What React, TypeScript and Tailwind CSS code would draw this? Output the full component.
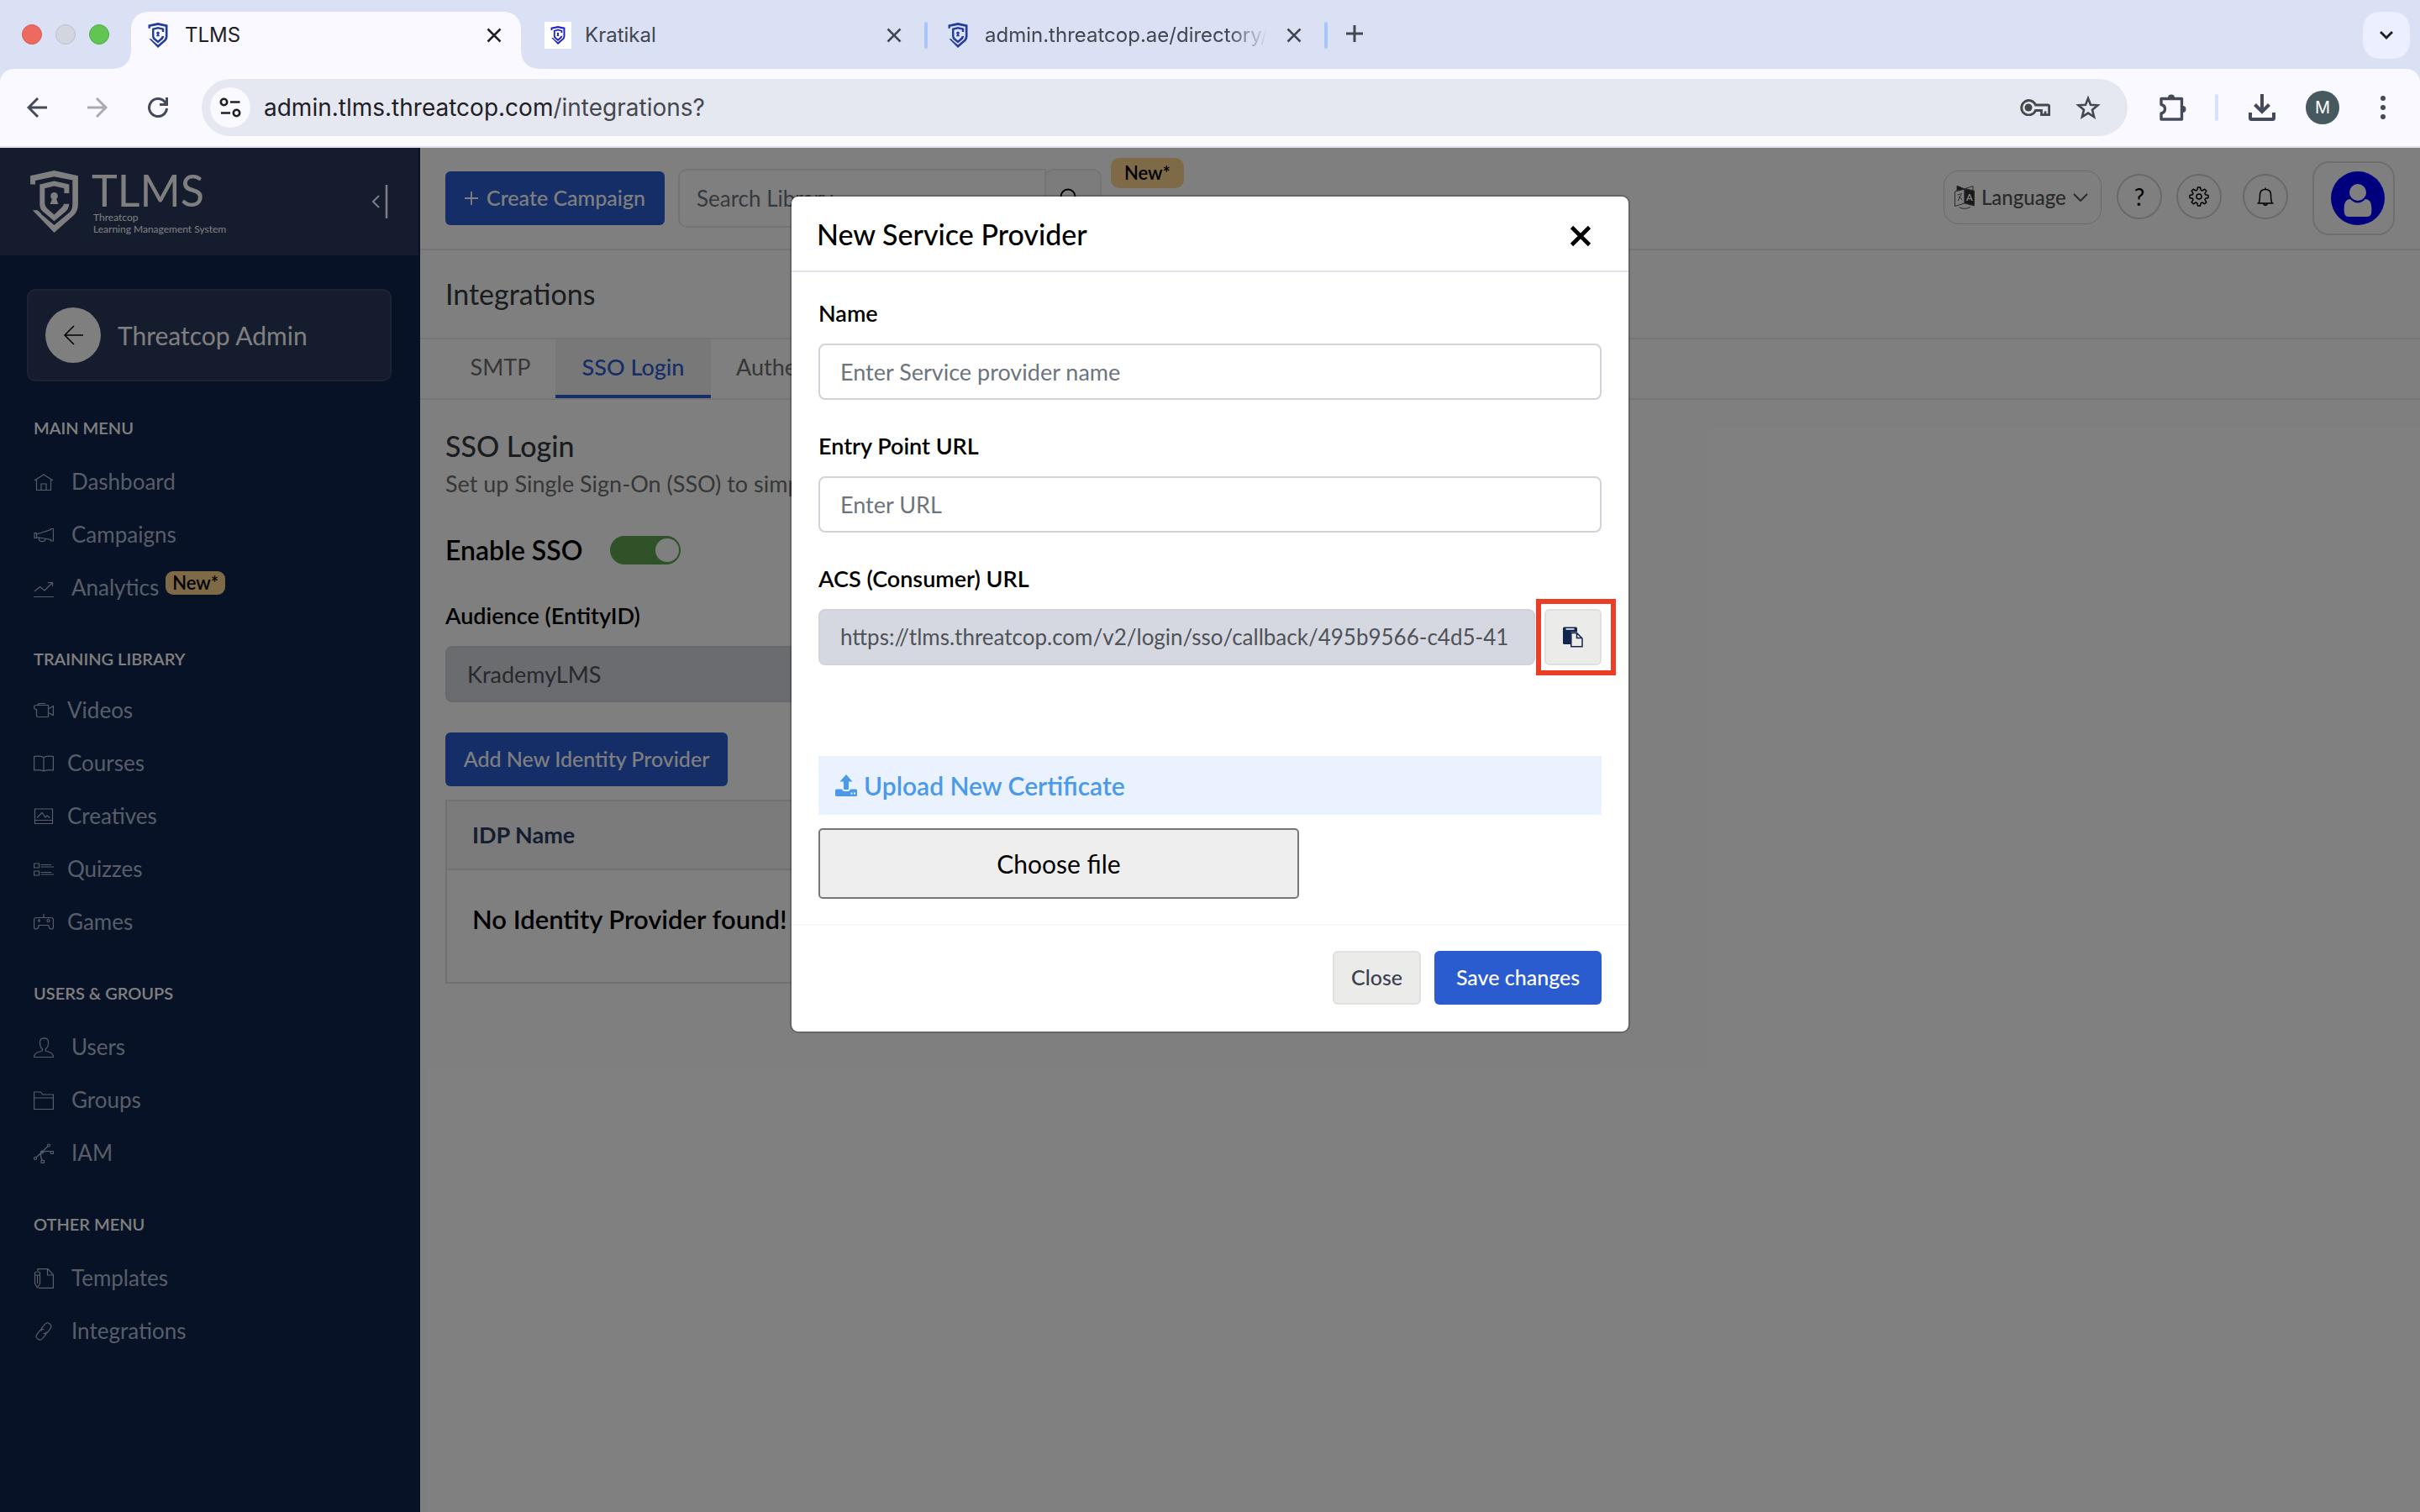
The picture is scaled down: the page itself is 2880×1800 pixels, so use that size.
import React, { useState } from "react";

type IconProps = { className?: string };

type MenuItem = {
  label: string;
  icon: React.FC;
  isNew?: boolean;
};

type MenuSection = {
  title: string;
  compact?: boolean;
  items: MenuItem[];
};

const ShieldLogo: React.FC<IconProps> = ({ className }) => (
  <svg viewBox="0 0 172 224" className={className} fill="currentColor" aria-hidden="true">
    <path d="M0 50V19L86 0L172 19V122Q172 144 158 160L86 224L8 143H24Q32 146 42 160L86 197L142 150Q152 140 152 122V35L86 22L18 36V50Z" />
    <path d="M140 82H122V64L86 56L52 64V118Q52 128 60 136L86 159L112 134Q119 128 121 120H140Q138 138 128 147L86 182L44 147Q34 137 34 120V50L86 38L140 50Z" />
    <circle cx="86" cy="92" r="13" />
    <path d="M80 98H92L101 121H71Z" />
  </svg>
);

// Thin outline icons of the side menu
const LineIcon: React.FC<{ children: React.ReactNode }> = ({ children }) => (
  <svg viewBox="0 0 24 24" className="size-6 shrink-0" fill="none" stroke="currentColor" strokeWidth="1.2" aria-hidden="true">
    {children}
  </svg>
);

const HomeIcon = () => (
  <LineIcon>
    <path d="M1 10L12 3L23 10M3.500 9V21.500H20.500V9M9 21.500V14H15V21.500" />
  </LineIcon>
);

const MegaphoneIcon = () => (
  <LineIcon>
    <path d="M1 9.500H3.500V15.500H1ZM3.500 11L20.500 5.500V4.500H23.500V19H20.500V17.500L3.500 14.500M6 15C6 21 14 21 14 16.500" />
  </LineIcon>
);

const TrendIcon = () => (
  <LineIcon>
    <path d="M1 16L7.500 10.500L13 15L22 6M17 5.500H22.500V10M0 22.500H24" />
  </LineIcon>
);

const VideoIcon = () => (
  <LineIcon>
    <path d="M3.500 10.500Q.600 10.500 .600 8.500V7.500Q.600 5.500 3.500 5.500H17.500V18.500Q17.500 19.500 16 19.500H5Q3.500 19.500 3.500 18ZM5 5.500Q5 3.500 7 3.500H14M17.500 10L23.400 6.500V17.500L17.500 14.500" />
  </LineIcon>
);

const BookIcon = () => (
  <LineIcon>
    <path d="M12 4.500Q7 2.500 .600 3.500V20Q7 19 12 21Q17 19 23.400 20V3.500Q17 2.500 12 4.500V21" />
  </LineIcon>
);

const PictureIcon = () => (
  <LineIcon>
    <path d="M1.500 3H22.500V20.500H1.500ZM1.500 16.500H22.500M4 13.500L10 7.500L14 13L16 11L19.500 13.500" />
  </LineIcon>
);

const QuizIcon = () => (
  <LineIcon>
    <path d="M.600 5H6.500V10H.600ZM.600 14H6.500V19H.600ZM8.500 6.500H21M8.500 9H24M8.500 15.500H21M8.500 18H24" />
  </LineIcon>
);

const GamepadIcon = () => (
  <LineIcon>
    <path d="M12 2V6M3 6.500H21Q23.400 6.500 23.400 9V18.500Q23.400 20 20.500 20Q19 20 17.500 15.500H6.500Q5 20 3.500 20Q.600 20 .600 18.500V9Q.600 6.500 3 6.500ZM6.500 8V12M4.500 10H8.500" />
    <circle cx="17.500" cy="10" r="1.500" />
  </LineIcon>
);

const UserIcon = () => (
  <LineIcon>
    <path d="M.600 23.500V22Q2 17.500 9.500 16.500Q10.500 16 10.500 14Q7.500 11.500 7.500 7Q7 1 12.500 .800Q18 1 17.500 7Q17.500 11.500 14 14Q14 16 15 16.500Q22 17.500 23.400 22V23.500Z" />
  </LineIcon>
);

const FolderIcon = () => (
  <LineIcon>
    <path d="M.600 2H8.500L10.500 5H23.400V22.500H.600ZM.600 9H23.400" />
  </LineIcon>
);

const NodesIcon = () => (
  <LineIcon>
    <path d="M3 17L17 3.500M8.500 12Q13 8 20.500 10M8.500 12Q8 17 10.500 20.500M20.500 9.500H23.400V12.500H20.500ZM9 20.500H12.500V23.400H9Z" />
    <circle cx="2" cy="18" r="1.500" />
    <circle cx="18" cy="2.500" r="1.500" />
    <circle cx="10" cy="10.500" r="1.500" />
  </LineIcon>
);

const TemplateIcon = () => (
  <LineIcon>
    <path d="M5 3V.600H17L23.400 7.500V23.400H6M16.500 .600V8H23.400M1.500 5.500Q1.500 4 4.500 4Q7.500 4 7.500 5.500V18L4.500 23L1.500 18ZM1.500 8H7.500M4.500 8V18" />
  </LineIcon>
);

const LinkIcon = () => (
  <LineIcon>
    <g transform="rotate(38 12 12)">
      <path d="M9.500 13.500Q7.800 12 7.800 10V4.500Q7.800 .500 12 .500Q16.200 .500 16.200 4.500V10Q16.200 13 13 14" />
      <path d="M14.500 10.500Q16.200 12 16.200 14V19.500Q16.200 23.500 12 23.500Q7.800 23.500 7.800 19.500V14Q7.800 11 11 10" />
    </g>
  </LineIcon>
);

const CloseIcon: React.FC<IconProps> = ({ className }) => (
  <svg viewBox="0 0 24 24" className={className} fill="none" stroke="currentColor" aria-hidden="true">
    <path d="M3 3L21 21M21 3L3 21" />
  </svg>
);

const ArrowIcon: React.FC<IconProps> = ({ className }) => (
  <svg viewBox="0 0 24 24" className={className} fill="none" stroke="currentColor" aria-hidden="true">
    <path d="M24 12H2M13 1L2 12L13 23" />
  </svg>
);

const menuSections: MenuSection[] = [
  {
    title: "MAIN MENU",
    items: [
      { label: "Dashboard", icon: HomeIcon },
      { label: "Campaigns", icon: MegaphoneIcon },
      { label: "Analytics", icon: TrendIcon, isNew: true },
    ],
  },
  {
    title: "TRAINING LIBRARY",
    compact: true,
    items: [
      { label: "Videos", icon: VideoIcon },
      { label: "Courses", icon: BookIcon },
      { label: "Creatives", icon: PictureIcon },
      { label: "Quizzes", icon: QuizIcon },
      { label: "Games", icon: GamepadIcon },
    ],
  },
  {
    title: "USERS & GROUPS",
    items: [
      { label: "Users", icon: UserIcon },
      { label: "Groups", icon: FolderIcon },
      { label: "IAM", icon: NodesIcon },
    ],
  },
  {
    title: "OTHER MENU",
    items: [
      { label: "Templates", icon: TemplateIcon },
      { label: "Integrations", icon: LinkIcon },
    ],
  },
];

const TabStrip: React.FC = () => (
  <div className="flex h-[82px] items-start bg-[#dbe1f5] pr-3 pl-[26px] text-[24px] text-[#41464f]">
    <div className="flex h-[82px] w-[130px] items-center gap-4">
      <span className="size-6 rounded-full border border-[#d85a4e] bg-[#ed6a5e]" />
      <span className="size-6 rounded-full border border-[#bcc0c9] bg-[#d2d6e0]" />
      <span className="size-6 rounded-full border border-[#52ac43] bg-[#61c554]" />
    </div>

    {/* Active tab with flared feet */}
    <div className="relative mt-[14px] flex h-[68px] w-[464px] items-center rounded-t-[20px] bg-[#f9f9ff] px-5 pb-3 text-[#1f2024]">
      <svg viewBox="0 0 24 24" className="absolute bottom-0 -left-6 size-6 fill-[#f9f9ff]" aria-hidden="true">
        <path d="M24 0V24H0Q24 24 24 0Z" />
      </svg>
      <svg viewBox="0 0 24 24" className="absolute -right-6 bottom-0 size-6 fill-[#f9f9ff]" aria-hidden="true">
        <path d="M0 0V24H24Q0 24 0 0Z" />
      </svg>
      <ShieldLogo className="h-[30px] w-6 text-[#233d99]" />
      <span className="ml-5 flex-1">TLMS</span>
      <button type="button" aria-label="Close tab" className="mr-0.5">
        <CloseIcon className="size-5 stroke-3" />
      </button>
    </div>

    <div className="flex h-[82px] w-[480px] items-center pt-0.5 pl-7">
      <span className="flex size-8 items-center justify-center bg-white">
        <ShieldLogo className="h-[22px] w-[18px] text-[#1c22c8]" />
      </span>
      <span className="ml-4 flex-1">Kratikal</span>
      <button type="button" aria-label="Close tab" className="mr-[26px]">
        <CloseIcon className="size-5 stroke-3" />
      </button>
    </div>

    <div className="flex h-[82px] w-[480px] items-center pt-0.5">
      <span className="h-8 w-1 rounded-full bg-[#a9c6fa]" />
      <ShieldLogo className="ml-6 h-[30px] w-6 text-[#233d99]" />
      <span className="ml-5 w-[336px] overflow-hidden whitespace-nowrap [mask-image:linear-gradient(to_right,black_86%,transparent)]">
        admin.threatcop.ae/directory/
      </span>
      <button type="button" aria-label="Close tab" className="ml-[22px]">
        <CloseIcon className="size-5 stroke-3" />
      </button>
      <span className="ml-[26px] h-8 w-1 rounded-full bg-[#a9c6fa]" />
    </div>

    <button type="button" aria-label="New tab" className="mt-[30px] ml-[22px]">
      <svg viewBox="0 0 20 20" className="size-5" fill="none" stroke="currentColor" strokeWidth="3" aria-hidden="true">
        <path d="M10 0V20M0 10H20" />
      </svg>
    </button>

    <button
      type="button"
      aria-label="Search tabs"
      className="mt-[14px] ml-auto flex size-14 items-center justify-center rounded-[20px] bg-[#ebefff] text-[#1f2024]"
    >
      <svg viewBox="0 0 16 12" className="h-3 w-4" fill="none" stroke="currentColor" strokeWidth="3" aria-hidden="true">
        <path d="M1 2L8 9L15 2" />
      </svg>
    </button>
  </div>
);

const AddressBar: React.FC = () => (
  <div className="bg-[#dbe1f5]">
    <div className="flex h-[94px] items-center rounded-t-[16px] border-b-2 border-[#dedfea] bg-[#f9f9ff] pr-[41px] pl-8 text-[#434a59]">
      <button type="button" aria-label="Back">
        <ArrowIcon className="size-6 stroke-3" />
      </button>
      <button type="button" aria-label="Forward" className="ml-12 text-[#a9abb2]">
        <ArrowIcon className="size-6 rotate-180 stroke-3" />
      </button>
      <button type="button" aria-label="Reload" className="ml-12">
        <svg viewBox="0 0 24 24" className="size-6" fill="none" stroke="currentColor" strokeWidth="3" aria-hidden="true">
          <path d="M22.500 13A10.500 10.500 0 1 1 20 5.200L22 7.500" />
          <path d="M22.500 0V8.500H14" />
        </svg>
      </button>

      <div className="ml-10 flex h-[68px] flex-1 items-center rounded-full bg-[#e5e8f1] pr-8 pl-2.5">
        <span className="flex size-12 items-center justify-center rounded-full bg-[#f9f9ff] text-[#1f2024]">
          <svg viewBox="0 0 26 24" className="h-6 w-[26px]" fill="none" stroke="currentColor" strokeWidth="2.600" aria-hidden="true">
            <circle cx="5.500" cy="5.500" r="3.700" />
            <path d="M13 5.500H24.500M2 18.500H13" />
            <circle cx="20.500" cy="18.500" r="3.700" />
          </svg>
        </span>
        <span className="ml-4 flex-1 text-[28px] leading-9 text-[#46474d]">
          <span className="text-[#1f2024]">admin.tlms.threatcop.com</span>/integrations?
        </span>
        <button type="button" aria-label="Passwords" className="text-[#46474b]">
          <svg viewBox="0 0 36 20" className="h-5 w-9" fill="none" stroke="currentColor" strokeWidth="2.800" aria-hidden="true">
            <path d="M18.500 7H33Q34.600 7 34.600 8.500V18.600H25.500V13.500H18.500A8.700 8.700 0 1 1 18.500 7Z" />
            <path d="M30 19V14.500" />
            <circle cx="10" cy="10" r="4.500" className="fill-current stroke-none" />
          </svg>
        </button>
        <button type="button" aria-label="Bookmark" className="ml-[30px] text-[#46474b]">
          <svg viewBox="0 0 30 30" className="size-[30px]" fill="none" stroke="currentColor" strokeWidth="2.600" aria-hidden="true">
            <path d="M15 4L18 11.700L26.500 12.300L20 17.800L22.100 26.200L15 21.600L7.900 26.200L10 17.800L3.500 12.300L12 11.700Z" />
          </svg>
        </button>
      </div>

      <button type="button" aria-label="Extensions" className="ml-[38px]">
        <svg viewBox="0 0 32 32" className="size-8" fill="none" stroke="currentColor" strokeWidth="3.400" strokeLinejoin="round" aria-hidden="true">
          <path d="M2 5.500H26.500V30H2V23Q6.500 22 6.500 17.500Q6.500 13.500 2 12.500Z" />
          <path d="M10 4.500A4 4 0 0 1 18 4.500ZM27.500 14A4 4 0 0 1 27.500 22Z" className="fill-current stroke-none" />
        </svg>
      </button>
      <span className="ml-[34px] h-8 w-1 rounded-full bg-[#d6e2fb]" />
      <button type="button" aria-label="Downloads" className="ml-9">
        <svg viewBox="0 0 32 32" className="size-8" fill="none" stroke="currentColor" strokeWidth="4" aria-hidden="true">
          <path d="M16 0V21M7.500 12.500L16 21L24.500 12.500M2 22V28.500Q2 30 3.500 30H28.500Q30 30 30 28.500V22" />
        </svg>
      </button>
      <button type="button" className="ml-9 size-10 rounded-full bg-[#46595f] text-[20px] text-white">
        M
      </button>
      <button type="button" aria-label="Menu" className="ml-[49px]">
        <svg viewBox="0 0 6 28" className="h-7 w-1.5 fill-current" aria-hidden="true">
          <circle cx="3" cy="3" r="3" />
          <circle cx="3" cy="14" r="3" />
          <circle cx="3" cy="25" r="3" />
        </svg>
      </button>
    </div>
  </div>
);

const Sidebar: React.FC = () => (
  <aside className="w-[500px] shrink-0 bg-[#0e244c] text-white">
    <div className="mr-0.5 flex h-32 items-center bg-[#28385c] pl-9">
      <ShieldLogo className="h-[74px] w-[57px]" />
      <div className="ml-4">
        <div className="text-[52px] leading-[52px]">TLMS</div>
        <div className="pl-0.5 text-[12px] leading-[14px]">Threatcop</div>
        <div className="pl-0.5 text-[12px] leading-[14px]">Learning Management System</div>
      </div>
      <button type="button" aria-label="Collapse menu" className="mr-9 ml-auto">
        <svg viewBox="0 0 20 40" className="h-10 w-5" fill="none" stroke="currentColor" aria-hidden="true">
          <path d="M9 13L2 20L9 27" strokeWidth="2" />
          <path d="M18 0V40" strokeWidth="2.500" />
        </svg>
      </button>
    </div>

    <div className="mt-10 mr-[34px] mb-[38px] ml-8 flex h-[110px] items-center rounded-[10px] border-2 border-[#3a4665] bg-[#28385c] pl-5">
      <button type="button" aria-label="Go back" className="flex size-[66px] items-center justify-center rounded-full bg-white text-black">
        <ArrowIcon className="size-6 stroke-[1.5]" />
      </button>
      <span className="ml-5 text-[30px]">Threatcop Admin</span>
    </div>

    <nav className="flex flex-col gap-9">
      {menuSections.map((section) => (
        <section key={section.title}>
          <h2 className="pl-10 text-[20px] leading-[34px] font-semibold">{section.title}</h2>
          <ul className={section.compact ? "mt-[13px]" : "mt-4"}>
            {section.items.map(({ label, icon: Icon, isNew }) => (
              <li key={label} className="pl-10 text-[26px] text-[#b0bbd2]">
                <a href="#" className={section.compact ? "flex h-[63px] items-center gap-4" : "flex h-[63px] items-center gap-[21px]"}>
                  <Icon />
                  <span className="flex items-start gap-2">
                    {label}
                    {isNew && (
                      <span className="rounded-[9px] bg-[#ffd591] px-2 text-[22px] leading-7 font-semibold text-black">New*</span>
                    )}
                  </span>
                </a>
              </li>
            ))}
          </ul>
        </section>
      ))}
    </nav>
  </aside>
);

const TopBar: React.FC = () => (
  <header className="flex h-[122px] items-start border-b-2 border-[#e6e6f2] px-[30px]">
    <button type="button" className="mt-7 flex h-16 w-[261px] items-center justify-center gap-2.5 rounded-md bg-[#2a5cd0] text-[25px] font-medium text-white">
      <svg viewBox="0 0 16 16" className="size-4" fill="none" stroke="currentColor" strokeWidth="1.800" aria-hidden="true">
        <path d="M8 0V16M0 8H16" />
      </svg>
      Create Campaign
    </button>
    <div className="mt-[25px] ml-4 flex h-[70px] w-[504px]">
      <input
        type="text"
        aria-label="Search Library"
        placeholder="Search Library"
        className="w-[438px] rounded-l-[10px] border-2 border-[#e6e6f2] px-5 text-[26px] placeholder:text-[#6c757d]"
      />
      <button type="button" aria-label="Search" className="-ml-0.5 flex flex-1 items-center rounded-[10px] border-2 border-[#e6e6f2] bg-[#f8f8f8] pl-4">
        <svg viewBox="0 0 24 24" className="size-6" fill="none" stroke="black" strokeWidth="1.800" aria-hidden="true">
          <circle cx="10" cy="10" r="8.500" />
          <path d="M16 16L23 23" />
        </svg>
      </button>
    </div>
    <span className="mt-3 ml-[11px] rounded-[10px] bg-[#ffd591] px-4 text-[22px] leading-9 font-semibold text-black">New*</span>

    <div className="ml-auto flex">
      <button type="button" className="mt-[27px] flex h-16 w-[188px] items-center rounded-[18px] border border-[#d4d4d4] pl-3 text-[24px] font-medium text-[#555]">
        <svg viewBox="0 0 24 28" className="h-7 w-6" fill="none" stroke="currentColor" aria-hidden="true">
          <path d="M3 0L12 4L3 6ZM12 3.500L23.500 6V24L12 21Z" className="fill-[#333]" />
          <path d="M12 4L.500 7V24.500L12 21ZM13 3.500L22 .500V5M3.500 11L9 9.500M4 18L8 11M5 13L9.500 17M6 26Q12 29 19 25.500" />
          <text x="14" y="18" fontSize="11" className="fill-white stroke-none font-bold">A</text>
        </svg>
        <span className="ml-2">Language</span>
        <svg viewBox="0 0 18 10" className="ml-2 h-2.5 w-[18px]" fill="none" stroke="currentColor" strokeWidth="2" aria-hidden="true">
          <path d="M1 1L9 9L17 1" />
        </svg>
      </button>
      <button type="button" className="mt-[31px] ml-[18px] size-[54px] rounded-full border-2 border-[#ced4da] text-[28px] text-black">
        ?
      </button>
      <button type="button" aria-label="Settings" className="mt-[31px] ml-[17px] flex size-[54px] items-center justify-center rounded-full border-2 border-[#ced4da]">
        <svg viewBox="0 0 24 24" className="size-6" fill="none" stroke="black" strokeWidth="1.500" strokeLinejoin="round" aria-hidden="true">
          <path d="M10.500 1H13.500L14.300 4.400L15.800 5L18.700 3.200L20.800 5.300L19 8.200L19.600 9.700L23 10.500V13.500L19.600 14.300L19 15.800L20.800 18.700L18.700 20.800L15.800 19L14.300 19.600L13.500 23H10.500L9.700 19.600L8.200 19L5.300 20.800L3.200 18.700L5 15.800L4.400 14.300L1 13.500V10.500L4.400 9.700L5 8.200L3.200 5.300L5.300 3.200L8.200 5L9.700 4.400Z" />
          <circle cx="12" cy="12" r="3" />
        </svg>
      </button>
      <button type="button" aria-label="Notifications" className="mt-[31px] ml-[25px] flex size-[54px] items-center justify-center rounded-full border-2 border-[#ced4da]">
        <svg viewBox="0 0 20 22" className="h-[22px] w-5" fill="none" stroke="black" strokeWidth="1.500" aria-hidden="true">
          <path d="M.500 19H19.500M2 19Q3.500 16 3.500 9Q3.500 2.500 10 2.500Q16.500 2.500 16.500 9Q16.500 16 18 19M10 2.500V.500M8 19.500Q8 21.300 10 21.300Q12 21.300 12 19.500" />
        </svg>
      </button>
      <button type="button" aria-label="Account" className="mt-4 ml-[29px] flex h-[88px] w-[98px] items-center justify-end rounded-[20px] border-2 border-[#dcdcdc] pr-2.5">
        <svg viewBox="0 0 64 64" className="size-16" aria-hidden="true">
          <circle cx="32" cy="32" r="32" fill="#0000fe" />
          <circle cx="32" cy="25" r="10" fill="white" />
          <path d="M16 50Q14 33 23 33Q32 42 41 33Q50 33 48 50Q47 54 43 54H21Q17 54 16 50Z" fill="white" />
        </svg>
      </button>
    </div>
  </header>
);

const IntegrationsPage: React.FC = () => (
  <main className="min-w-0 flex-1 bg-white">
    <TopBar />
    <h1 className="border-b-2 border-[#e6e6f2] pl-[30px] text-[34px] leading-[104px] text-[#343a40]">Integrations</h1>
    <nav className="flex h-[72px] border-b-2 border-[#e6e6f2] pl-[30px] text-[27px] text-[#6e6e6e]">
      <a href="#" className="flex w-[131px] items-center justify-center pb-1">SMTP</a>
      <a href="#" className="flex w-[185px] items-center justify-center border-b-4 border-[#2a5cd0] bg-[#f1f1f1] font-medium text-[#2a5cd0]">
        SSO Login
      </a>
      <a href="#" className="flex items-center pb-1 pl-[30px]">Authentication</a>
    </nav>

    <div className="w-1/2 px-[30px] pt-[33px]">
      <h2 className="text-[34px] leading-[44px] font-medium text-[#343a40]">SSO Login</h2>
      <p className="mt-[7px] text-[27px] leading-8 text-[#6e6e6e]">Set up Single Sign-On (SSO) to simplify access</p>

      <label className="mt-[43px] flex h-10 items-center gap-8 text-[32px] font-semibold text-black">
        Enable SSO
        <input type="checkbox" role="switch" defaultChecked className="peer sr-only" />
        <span className="flex h-[34px] w-[84px] items-center justify-end rounded-full bg-[#5ea452] pr-0.5">
          <span className="size-7 rounded-full bg-white" />
        </span>
      </label>

      <label htmlFor="audience" className="mt-[42px] block text-[27px] leading-8 font-semibold text-black">
        Audience (EntityID)
      </label>
      <input
        id="audience"
        readOnly
        value="KrademyLMS"
        className="mt-5 block h-[67px] w-full rounded-lg border-2 border-[#ced4da] bg-[#d5d8e0] px-6 text-[27px] text-[#4f5258]"
      />

      <button type="button" className="mt-9 h-16 w-[336px] rounded-md bg-[#2a5cd0] text-[25px] font-medium text-white">
        Add New Identity Provider
      </button>

      <table className="mt-4 w-full border-2 border-[#e2e2e2] text-left">
        <thead>
          <tr className="h-[82px] border-b-2 border-[#e2e2e2] bg-[#f6f6f6]">
            <th className="pl-[30px] text-[27px] font-bold text-[#2b3a63]">IDP Name</th>
          </tr>
        </thead>
        <tbody>
          <tr className="h-[135px]">
            <td className="pb-4 pl-[30px] text-[31px] font-semibold text-black">No Identity Provider found!</td>
          </tr>
        </tbody>
      </table>
    </div>
  </main>
);

const ServiceProviderModal: React.FC = () => {
  const [name, setName] = useState("");
  const [entryPoint, setEntryPoint] = useState("");

  return (
    <div role="dialog" aria-labelledby="modal-title" className="w-[1000px] rounded-[10px] border-2 border-black/20 bg-white bg-clip-padding text-black">
      <div className="flex h-[90px] items-center justify-between border-b-2 border-[#dee4ea] pr-[43px] pl-[30px]">
        <h2 id="modal-title" className="text-[34px] font-medium">New Service Provider</h2>
        <button type="button" aria-label="Close" className="pt-1.5">
          <CloseIcon className="size-7 stroke-4" />
        </button>
      </div>

      <div className="px-8 pt-[33px] pb-[30px] text-[27px]">
        <label htmlFor="name" className="block leading-8 font-semibold">Name</label>
        <input
          id="name"
          value={name}
          onChange={(e) => setName(e.target.value)}
          placeholder="Enter Service provider name"
          className="mt-5 block h-[67px] w-full rounded-lg border-2 border-[#ced4da] px-6 placeholder:text-[#6c757d]"
        />

        <label htmlFor="entry" className="mt-[39px] block leading-8 font-semibold">Entry Point URL</label>
        <input
          id="entry"
          value={entryPoint}
          onChange={(e) => setEntryPoint(e.target.value)}
          placeholder="Enter URL"
          className="mt-5 block h-[67px] w-full rounded-lg border-2 border-[#ced4da] px-6 placeholder:text-[#6c757d]"
        />

        <label htmlFor="acs" className="mt-[39px] block leading-8 font-semibold">ACS (Consumer) URL</label>
        <div className="mt-5 flex h-[67px] gap-[11px]">
          <input
            id="acs"
            readOnly
            value="https://tlms.threatcop.com/v2/login/sso/callback/495b9566-c4d5-41"
            className="min-w-0 flex-1 rounded-lg border-2 border-[#ced4da] bg-[#d5d8e0] px-6 text-[26px] text-[#4f5258]"
          />
          <div className="relative w-[68px]">
            <button type="button" aria-label="Copy URL" className="flex size-full items-center justify-center rounded-md border-2 border-[#dfdfdf] bg-[#ebebe9] text-[#14264f]">
              <svg viewBox="0 0 24 25" className="h-[25px] w-6" aria-hidden="true">
                <path d="M1.500 .500H15.500Q17 .500 17 2V6.500H9.500V21H1.500Q0 21 0 19.500V2Q0 .500 1.500 .500Z" fill="currentColor" />
                <path d="M3.500 2H13.500V3.800H3.500Z" fill="#dfe2ea" />
                <path d="M9.800 7.500H16.500L23 14V23.800H9.800ZM16.500 7.500V13.500H23" fill="#ebebe9" stroke="currentColor" strokeWidth="1.500" />
              </svg>
            </button>
            <span className="pointer-events-none absolute -top-3 -right-[17px] -bottom-3 -left-2.5 border-6 border-[#ea3f26]" />
          </div>
        </div>

        <div className="mt-[108px] flex h-[70px] items-center gap-2 bg-[#e9f2fe] pl-5 text-[30px] font-semibold text-[#4b9ae9]">
          <svg viewBox="0 0 26 26" className="size-[26px] fill-current" aria-hidden="true">
            <path d="M13 0L20.500 8.500H16V17Q16 18 15 18H11Q10 18 10 17V8.500H5.500Z" />
            <path d="M1.500 17.500H8Q9 20 11 20H15Q17 20 18 17.500H24.500Q26 17.500 26 19V24.500Q26 26 24.500 26H1.500Q0 26 0 24.500V19Q0 17.500 1.500 17.500ZM18.500 21.500V23.500H20.500V21.500ZM22 21.500V23.500H24V21.500Z" fillRule="evenodd" />
          </svg>
          Upload New Certificate
        </div>
        <button type="button" className="mt-4 block h-[84px] w-[572px] rounded-[5px] border-2 border-[#767676] bg-[#eeeeee] text-[30px]">
          Choose file
        </button>
      </div>

      <div className="flex justify-end gap-4 border-t-2 border-[#f7f7f7] px-8 pt-[30px] pb-8 text-[25px] font-medium">
        <button type="button" className="h-16 w-[105px] rounded-md border-2 border-[#e0e0de] bg-[#ebebe9] text-[#3b3f52]">
          Close
        </button>
        <button type="button" className="h-16 w-[199px] rounded-md bg-[#2a5cd0] text-white">
          Save changes
        </button>
      </div>
    </div>
  );
};

const App: React.FC = () => {
  return (
    <div className="flex min-h-screen flex-col">
      <div className="font-[Inter,sans-serif]">
        <TabStrip />
        <AddressBar />
      </div>

      <div className="relative flex flex-1 overflow-hidden font-[Lato,sans-serif]">
        <Sidebar />
        <IntegrationsPage />

        {/* Backdrop and dialog */}
        <div className="absolute inset-0 flex items-start justify-center bg-black/50 pt-14">
          <ServiceProviderModal />
        </div>
      </div>
    </div>
  );
};

export default App;
